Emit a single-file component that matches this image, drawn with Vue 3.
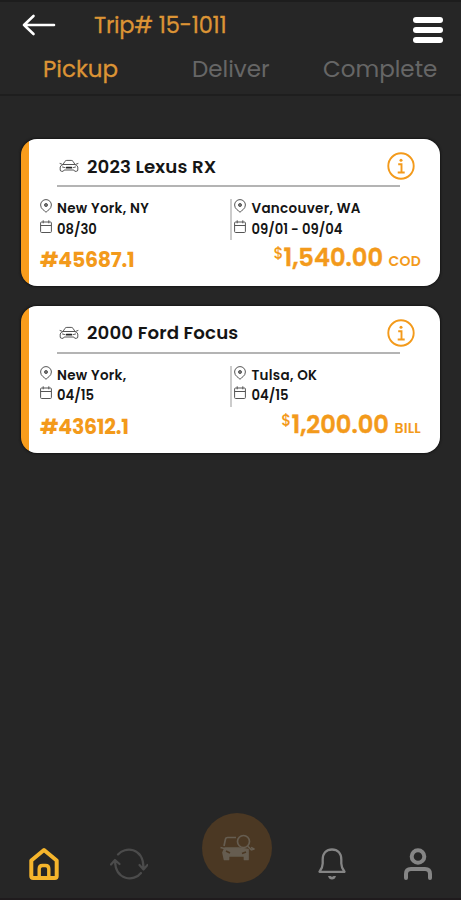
<template>
  <div class="screen">
    <header class="header">
      <div class="title-row">
        <svg class="back" viewBox="0 0 34 22" fill="none" stroke="#fff" stroke-width="2.6" stroke-linecap="round" stroke-linejoin="round">
          <path d="M32 11H2M11.500 2L2 11l9.500 9" />
        </svg>
        <h1>Trip# 15-1011</h1>
        <button class="menu" aria-label="Menu">
          <span></span>
          <span></span>
          <span></span>
        </button>
      </div>
      <nav class="tabs">
        <a
          v-for="tab in tabs"
          :key="tab"
          :class="['tab', tab.toLowerCase(), { active: tab === activeTab }]"
          @click="activeTab = tab"
        >{{ tab }}</a>
      </nav>
    </header>

    <main class="orders">
      <article v-for="order in orders" :key="order.id" class="card">
        <div class="card-head">
          <svg class="car" viewBox="0 0 20 14" fill="none" stroke="#555" stroke-width="1" stroke-linejoin="round" stroke-linecap="round">
            <path d="M4 5.500L6 2.300q.6-.9 1.800-.9h4.400q1.200 0 1.800.9l2 3.200M4 5.500Q1.500 6.300 1.200 8v3q0 1.300 1.600 1.300h1.400l1-1.300h9.600l1 1.300h1.400q1.600 0 1.600-1.300V8q-.3-1.700-2.800-2.500M4 5.500h12M1 4.500l2 .7M19 4.500l-2 .7M3.500 8l2 .5M16.500 8l-2 .5" />
            <path d="M7.500 8.700h5" stroke="#222" stroke-width="1.700" />
          </svg>
          <h2>{{ order.vehicle }}</h2>
          <svg class="info" viewBox="0 0 28 28" fill="none" stroke="#f39a1b" stroke-width="1.900">
            <circle cx="14" cy="14" r="12.700" />
            <path d="M11.200 12.300h3.300v8.200M10.700 20.500h7" />
            <circle cx="14" cy="8.300" r="1.500" fill="#f39a1b" stroke="none" />
          </svg>
        </div>
        <div class="stops">
          <div v-for="(stop, key) in order.stops" :key="key" class="stop">
            <div class="line">
              <svg class="pin" viewBox="0 0 12 14" fill="none" stroke="#555" stroke-width="1">
                <path d="M6 13.300C4.800 11.500.6 10.200.6 6a5.400 5.400 0 0 1 10.800 0C11.400 10.200 7.200 11.500 6 13.300z" />
                <circle cx="6" cy="6" r="1.500" fill="#777" />
              </svg>
              <span class="city">{{ stop.city }}</span>
            </div>
            <div class="line">
              <svg class="calendar" viewBox="0 0 12 14" fill="none" stroke="#555" stroke-width="1">
                <rect x=".6" y="2" width="10.800" height="10.500" rx="1" />
                <path d="M.6 5.500h10.800M3.200.3v3M8.800.3v3" />
              </svg>
              <span class="date">{{ stop.date }}</span>
            </div>
          </div>
        </div>
        <div class="card-foot">
          <span class="number">#{{ order.id }}</span>
          <span class="price"><sup>$</sup><b>{{ order.price }}</b><small>{{ order.payment }}</small></span>
        </div>
      </article>
    </main>

    <footer class="bottom-nav">
      <svg class="home" viewBox="0 0 32 34" fill="none" stroke="#f5b52c" stroke-width="4" stroke-linejoin="round">
        <path d="M3.300 13.500L16 3l12.700 10.500V29q0 2-2 2H5.300q-2 0-2-2z" />
        <path d="M11.200 31V22q0-3.500 3.300-3.500h3q3.300 0 3.300 3.500v9" stroke-width="3.400" />
      </svg>
      <svg class="sync" viewBox="0 0 38 34" fill="none" stroke="#4b4b4b" stroke-width="2.200" stroke-linecap="round" stroke-linejoin="round">
        <path d="M8 7.500C15-.5 33 0 33.500 20.500M29.500 18l4 4.500 4-4.500M31 26C24 35 5.500 33.500 5 14M1 17.500l4-4.500 4.500 4" />
      </svg>
      <div class="trip-button">
        <svg viewBox="0 0 36 28" fill="none" stroke="#665d50" stroke-width="1.700" stroke-linejoin="round">
          <path d="M5 12l1.500-7q.3-1.500 2-1.500H17M1.500 13.500l4 1M32 16l3-1-3-1.500" />
          <circle cx="24.500" cy="7.500" r="6" />
          <path d="M28.500 12l4 4" />
          <path d="M6 14h14l9 1.500v10h-3.500V22h-16v3.500H5.500l-1.500-7z" fill="#665d50" />
          <path d="M7 17l4 2M27 18l-4 1.500" stroke="#4b3823" />
        </svg>
      </div>
      <svg class="bell" viewBox="0 0 30 34" fill="none" stroke="#858585" stroke-width="2.300" stroke-linejoin="round">
        <path d="M2.500 24.800c2-2.600 3.200-4.500 3.200-8.300v-4C5.700 6 9.500 2.500 15 2.500S24.300 6 24.300 12.500v4c0 3.800 1.200 5.700 3.200 8.300z" />
        <path d="M11 29h2.500q1.500 1.500 3 0H19q-1 3.500-4 3.500T11 29z" fill="#858585" stroke="none" />
      </svg>
      <svg class="user" viewBox="0 0 30 34" fill="none" stroke="#858585" stroke-width="4" stroke-linecap="round">
        <circle cx="15" cy="9.500" r="6.300" />
        <path d="M3 31v-4q0-5 5-5h14q5 0 5 5v4" />
      </svg>
    </footer>
  </div>
</template>

<script setup>
import { ref } from 'vue';

const tabs = ['Pickup', 'Deliver', 'Complete'];
const activeTab = ref('Pickup');

const orders = [
  {
    id: '45687.1',
    vehicle: '2023 Lexus RX',
    price: '1,540.00',
    payment: 'COD',
    stops: [
      { city: 'New York, NY', date: '08/30' },
      { city: 'Vancouver, WA', date: '09/01 - 09/04' },
    ],
  },
  {
    id: '43612.1',
    vehicle: '2000 Ford Focus',
    price: '1,200.00',
    payment: 'BILL',
    stops: [
      { city: 'New York,', date: '04/15' },
      { city: 'Tulsa, OK', date: '04/15' },
    ],
  },
];
</script>

<style>
  body {
    background-color: #262626;
  }
</style>

<style scoped>
  .screen {
    width: 461px;
    height: 900px;
    box-sizing: border-box;
    background-color: #262626;
    border-top: 2px solid #1d1d1d;
    border-bottom: 2px solid #1f1b1d;
    display: flex;
    flex-direction: column;
    font-family: Poppins, Inter, "Open Sans", sans-serif;
    overflow: hidden;
  }

  .header {
    height: 94px;
    flex: none;
    box-sizing: border-box;
    border-bottom: 2px solid #1e1e1e;
  }

  .title-row {
    height: 46px;
    display: flex;
    align-items: center;
    padding: 0 18px 0 22px;
  }

  .back {
    width: 34px;
    height: 22px;
  }

  h1 {
    flex: 1;
    margin: 0 0 0 38px;
    color: #dc9435;
    font-size: 22.5px;
    line-height: 30px;
    font-weight: 400;
    letter-spacing: -.25px;
    -webkit-text-stroke: .3px;
  }

  .menu {
    border: 0;
    padding: 0;
    margin-top: 9px;
    background: none;
    display: flex;
    flex-direction: column;
    gap: 4px;
  }

  .menu span {
    width: 30px;
    height: 6px;
    border-radius: 3px;
    background-color: white;
  }

  .tabs {
    display: flex;
    font-size: 23px;
    line-height: 42px;
    padding-left: 43px;
    color: #666;
  }

  .tab {
    cursor: pointer;
  }

  .pickup {
    width: 149px;
  }

  .deliver {
    width: 131px;
  }

  .tab.active {
    color: #dc9435;
    -webkit-text-stroke: .3px;
  }

  .orders {
    flex: 1;
    padding: 43px 21px 0;
    display: flex;
    flex-direction: column;
    gap: 19.5px;
  }

  .card {
    height: 147px;
    box-sizing: border-box;
    background: linear-gradient(to right, #f99d1c 8px, white 8px);
    border-radius: 16px;
    box-shadow: 0 0 2px 1px #161616;
    padding: 0 19px 0 8px;
    color: #151515;
  }

  .card-head {
    width: 343px;
    height: 48px;
    box-sizing: border-box;
    margin-left: 28px;
    padding: 8px 0 0 2px;
    border-bottom: 2px solid #b4b4b4;
    display: flex;
    align-items: center;
  }

  .car {
    width: 20px;
    height: 14px;
  }

  h2 {
    flex: 1;
    margin: 0 0 0 8px;
    font-size: 18.2px;
    font-weight: 600;
    letter-spacing: .13px;
    white-space: nowrap;
  }

  .info {
    width: 28px;
    height: 28px;
    margin-right: -15px;
  }

  .stops {
    display: flex;
    padding: 12px 0 0 10.5px;
  }

  .stop {
    width: 190.5px;
    height: 41px;
  }

  .stop + .stop {
    width: 180px;
    border-left: 2px solid #ccc;
    padding-left: 2px;
  }

  .line {
    height: 20.5px;
    display: flex;
    align-items: flex-start;
  }

  .pin, .calendar {
    width: 12px;
    height: 14px;
    margin-right: 5.5px;
  }

  .city, .date {
    font-size: 13px;
    line-height: 20px;
    font-weight: 600;
    white-space: nowrap;
  }

  .city {
    font-size: 13.5px;
    letter-spacing: .3px;
  }

  .date {
    font-size: 13.2px;
  }

  .card-foot {
    display: flex;
    justify-content: space-between;
    align-items: baseline;
    padding-left: 11px;
    line-height: 35px;
    color: #f39a1b;
  }

  .number {
    font-size: 20.5px;
    font-weight: 700;
    letter-spacing: -.25px;
    position: relative;
    top: 1px;
  }

  .price {
    display: flex;
    align-items: baseline;
  }

  .price sup {
    font-size: 15.5px;
    font-weight: 500;
    line-height: 1;
    position: relative;
    top: -7px;
    vertical-align: baseline;
  }

  .price b {
    font-size: 24.2px;
    font-weight: 600;
    -webkit-text-stroke: .4px;
  }

  .price small {
    margin-left: 5.5px;
    font-size: 14px;
    font-weight: 600;
    letter-spacing: .2px;
  }

  .bottom-nav {
    height: 92px;
    flex: none;
    display: flex;
    align-items: flex-start;
    padding-left: 28px;
  }

  .home {
    width: 32px;
    height: 34px;
    margin-top: 41px;
  }

  .sync {
    width: 38px;
    height: 34px;
    margin: 41px 0 0 50px;
  }

  .trip-button {
    width: 70px;
    height: 70px;
    margin: 7px 0 0 54px;
    border-radius: 50%;
    background-color: #4b3823;
    display: flex;
    align-items: center;
    justify-content: center;
  }

  .trip-button svg {
    width: 36px;
    height: 28px;
  }

  .bell {
    width: 30px;
    height: 34px;
    margin: 41px 0 0 45px;
  }

  .user {
    width: 30px;
    height: 34px;
    margin: 41px 0 0 56px;
  }
</style>
